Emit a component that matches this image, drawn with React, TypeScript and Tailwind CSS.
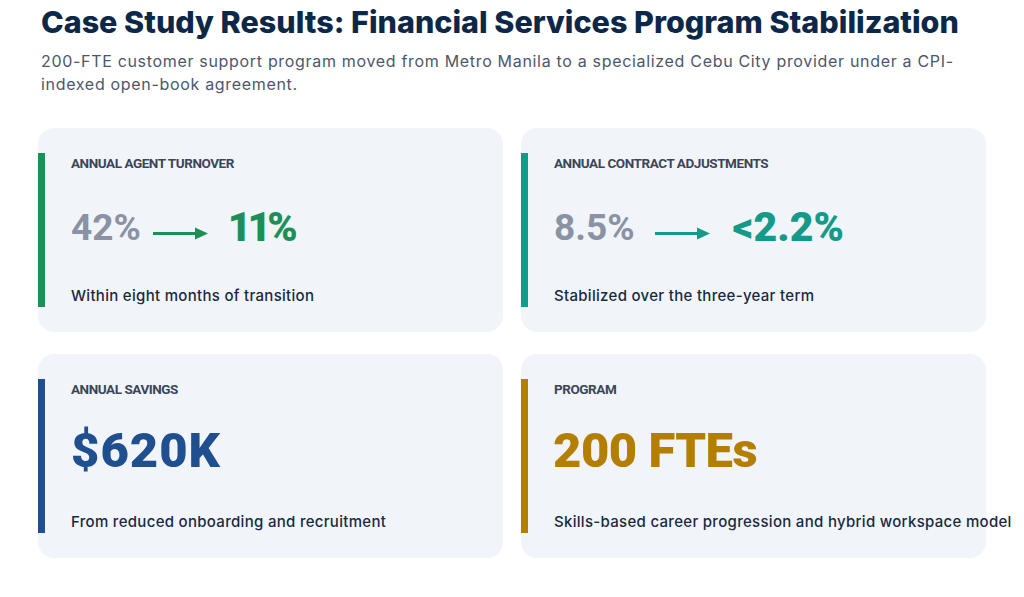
const FONT = "font-['Inter','Noto_Sans',sans-serif]";
const NUM = "font-['Roboto','Inter',sans-serif]";

function Arrow({ color }: { color: string }) {
  return (
    <svg width="55" height="13" viewBox="0 0 55 13" className="mt-[11px] shrink-0">
      <line x1="0" y1="6.5" x2="44" y2="6.5" stroke={color} strokeWidth="3" />
      <path d="M42 0.5 L55 6.5 L42 12.5 Z" fill={color} />
    </svg>
  );
}

type Stat = {
  label: string;
  bar: string;
  desc: string;
};

function Card({
  label,
  bar,
  desc,
  top,
  children,
}: Stat & { top: string; children: React.ReactNode }) {
  return (
    <div className="rounded-2xl bg-[#f1f5fa] py-[25px]">
      <div className={`flex h-[154px] flex-col border-l-[7px] pl-[26px] ${bar}`}>
        <div className={`${NUM} text-[13.5px] font-bold uppercase leading-5 tracking-[-0.45px] text-[#3b4559]`}>
          {label}
        </div>
        <div className={top}>{children}</div>
        <div className="mt-auto mb-[1px] whitespace-nowrap text-[15px] font-medium leading-5 tracking-[0.3px] text-[#1a2942]">
          {desc}
        </div>
      </div>
    </div>
  );
}

export default function App() {
  return (
    <div className={`min-h-screen bg-white px-[38px] pt-[4px] ${FONT}`}>
      <h1 className="pl-[3px] text-[30.5px] font-extrabold leading-9 text-[#0c2748]">
        Case Study Results: Financial Services Program Stabilization
      </h1>
      <p className="mt-[10px] pl-[3px] pr-[20px] text-[16px] leading-[23px] tracking-[0.68px] text-[#4d576a]">
        200-FTE customer support program moved from Metro Manila to a specialized Cebu City provider under a CPI-indexed open-book agreement.
      </p>

      <div className="mt-[32px] grid grid-cols-2 gap-x-[18px] gap-y-[22px]">
        <Card
          label="Annual Agent Turnover"
          bar="border-[#1f8f58]"
          desc="Within eight months of transition"
          top="mt-[34px]"
        >
          <div className={`${NUM} flex items-center leading-none`}>
            <span className="text-[37px] font-bold text-[#8a92a4]">42%</span>
            <span className="ml-[12px]">
              <Arrow color="#1f8f58" />
            </span>
            <span className="ml-[20px] text-[41px] font-black tracking-[-4px] text-[#1f8f58]">11%</span>
          </div>
        </Card>
        <Card
          label="Annual Contract Adjustments"
          bar="border-[#149a89]"
          desc="Stabilized over the three-year term"
          top="mt-[34px]"
        >
          <div className={`${NUM} flex items-center leading-none`}>
            <span className="text-[37px] font-bold text-[#8a92a4]">8.5%</span>
            <span className="ml-[20px]">
              <Arrow color="#149a89" />
            </span>
            <span className="ml-[23px] text-[41px] font-black text-[#149a89]">&lt;2.2%</span>
          </div>
        </Card>
        <Card
          label="Annual Savings"
          bar="border-[#1f4f8e]"
          desc="From reduced onboarding and recruitment"
          top="mt-[27px]"
        >
          <div className={`${NUM} text-[49px] font-black leading-none tracking-[1px] text-[#1f4f8e]`}>$620K</div>
        </Card>
        <Card
          label="Program"
          bar="border-[#b47e00]"
          desc="Skills-based career progression and hybrid workspace model"
          top="mt-[27px]"
        >
          <div className={`${NUM} ml-[-1px] text-[49px] font-black leading-none tracking-[-0.5px] text-[#b47e00]`}>200 FTEs</div>
        </Card>
      </div>
    </div>
  );
}
